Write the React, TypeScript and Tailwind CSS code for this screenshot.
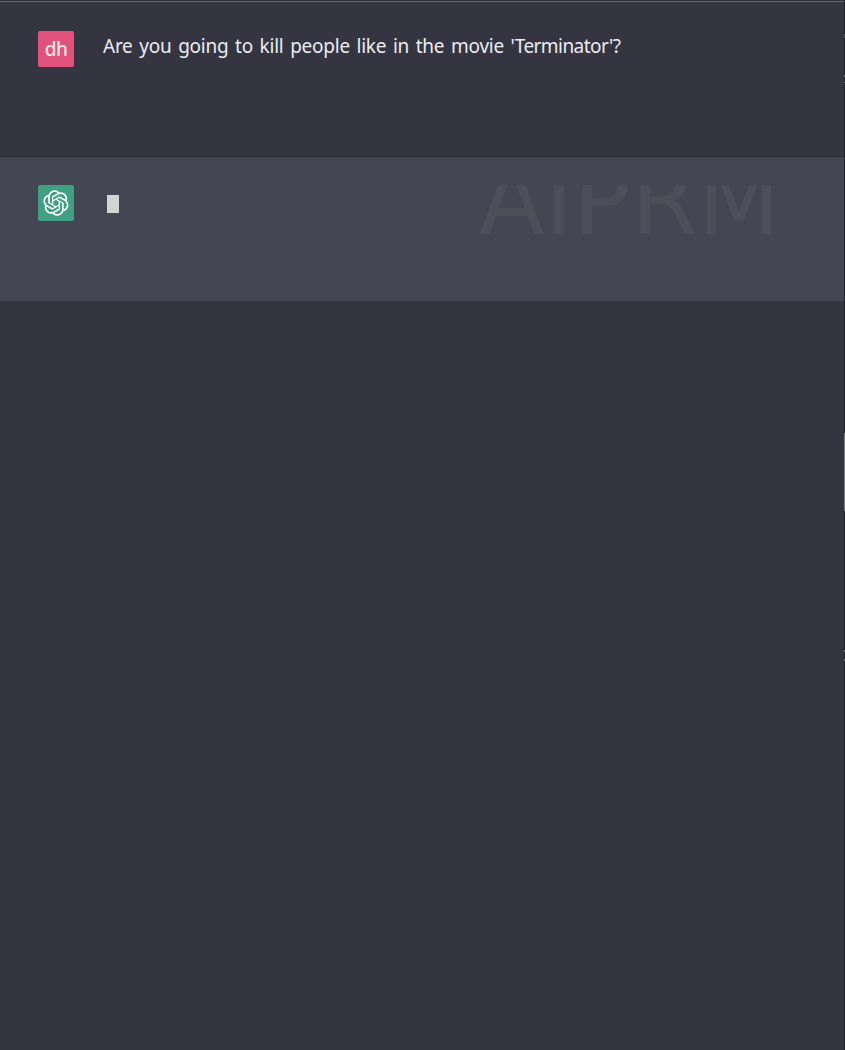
import React from 'react';

const LogoIcon: React.FC = () => (
  <svg viewBox="0 0 41 41" fill="currentColor" className="h-[26px] w-[26px]">
    <path d="M37.5324 16.8707C37.9808 15.5241 38.1363 14.0974 37.9886 12.6859C37.8409 11.2744 37.3934 9.91076 36.676 8.68622C35.6126 6.83404 33.9882 5.3676 32.0373 4.4985C30.0864 3.62941 27.9098 3.40259 25.8215 3.85078C24.8796 2.7893 23.7219 1.94125 22.4257 1.36341C21.1295 0.785575 19.7249 0.491269 18.3058 0.500197C16.1708 0.495044 14.0893 1.16803 12.3614 2.42214C10.6335 3.67624 9.34853 5.44666 8.6917 7.47815C7.30085 7.76286 5.98686 8.3414 4.8377 9.17505C3.68854 10.0087 2.73073 11.0782 2.02839 12.312C0.956464 14.1591 0.498905 16.2988 0.721698 18.4228C0.944492 20.5467 1.83612 22.5449 3.268 24.1293C2.81966 25.4759 2.66413 26.9026 2.81182 28.3141C2.95951 29.7256 3.40701 31.0892 4.12437 32.3138C5.18791 34.1659 6.8123 35.6322 8.76321 36.5013C10.7141 37.3704 12.8907 37.5973 14.9789 37.1492C15.9208 38.2107 17.0786 39.0587 18.3747 39.6366C19.6709 40.2144 21.0755 40.5087 22.4946 40.4998C24.6307 40.5054 26.7133 39.8321 28.4418 38.5772C30.1704 37.3223 31.4556 35.5506 32.1119 33.5179C33.5027 33.2332 34.8167 32.6547 35.9659 31.821C37.115 30.9874 38.0728 29.9178 38.7752 28.684C39.8458 26.8371 40.3023 24.6979 40.0789 22.5748C39.8556 20.4517 38.9639 18.4544 37.5324 16.8707ZM22.4978 37.8849C20.7443 37.8874 19.0459 37.2733 17.6994 36.1501C17.7601 36.117 17.8666 36.0586 17.936 36.0161L25.9004 31.4156C26.1003 31.3019 26.2663 31.137 26.3813 30.9378C26.4964 30.7386 26.5563 30.5124 26.5549 30.2825V19.0542L29.9213 20.998C29.9389 21.0068 29.9541 21.0198 29.9656 21.0359C29.977 21.052 29.9842 21.0707 29.9867 21.0902V30.3889C29.9842 32.375 29.1946 34.2791 27.7909 35.6841C26.3872 37.0892 24.4838 37.8806 22.4978 37.8849ZM6.39227 31.0064C5.51397 29.4888 5.19742 27.7107 5.49804 25.9832C5.55718 26.0187 5.66048 26.0818 5.73461 26.1244L13.699 30.7248C13.8975 30.8408 14.1233 30.902 14.3532 30.902C14.583 30.902 14.8088 30.8408 15.0073 30.7248L24.731 25.1103V28.9979C24.7321 29.0177 24.7283 29.0376 24.7199 29.0556C24.7115 29.0736 24.6988 29.0893 24.6829 29.1012L16.6317 33.7497C14.9096 34.7416 12.8643 35.0097 10.9447 34.4954C9.02506 33.9811 7.38785 32.7263 6.39227 31.0064ZM4.29707 13.6194C5.17156 12.0998 6.55279 10.9364 8.19885 10.3327C8.19885 10.4013 8.19491 10.5228 8.19491 10.6071V19.808C8.19351 20.0378 8.25334 20.2638 8.36823 20.4629C8.48312 20.6619 8.64893 20.8267 8.84863 20.9404L18.5723 26.5542L15.206 28.4979C15.1894 28.5089 15.1703 28.5155 15.1505 28.5173C15.1307 28.5191 15.1107 28.516 15.0924 28.5082L7.04046 23.8557C5.32135 22.8601 4.06716 21.2235 3.55289 19.3046C3.03862 17.3858 3.30624 15.3413 4.29707 13.6194ZM31.955 20.0556L22.2312 14.4411L25.5976 12.4981C25.6142 12.4872 25.6333 12.4805 25.6531 12.4787C25.6729 12.4769 25.6928 12.4801 25.7111 12.4879L33.7631 17.1364C34.9967 17.849 36.0017 18.8982 36.6606 20.1613C37.3194 21.4244 37.6047 22.849 37.4832 24.2684C37.3617 25.6878 36.8382 27.0432 35.9743 28.1759C35.1103 29.3086 33.9415 30.1717 32.6047 30.6641C32.6047 30.5947 32.6047 30.4733 32.6047 30.3889V21.188C32.6066 20.9586 32.5474 20.7328 32.4332 20.5338C32.319 20.3348 32.154 20.1698 31.955 20.0556ZM35.3055 15.0128C35.2464 14.9765 35.1431 14.9142 35.069 14.8717L27.1045 10.2712C26.906 10.1554 26.6803 10.0943 26.4504 10.0943C26.2206 10.0943 25.9948 10.1554 25.7963 10.2712L16.0726 15.8858V11.9982C16.0715 11.9783 16.0753 11.9585 16.0837 11.9405C16.0921 11.9225 16.1048 11.9068 16.1207 11.8949L24.1719 7.25025C25.4053 6.53903 26.8158 6.19376 28.2383 6.25482C29.6608 6.31589 31.0364 6.78077 32.2044 7.59508C33.3723 8.40939 34.2842 9.53945 34.8334 10.8531C35.3826 12.1667 35.5464 13.6095 35.3055 15.0128ZM14.2424 21.9419L10.8752 19.9981C10.8576 19.9893 10.8423 19.9763 10.8309 19.9602C10.8195 19.9441 10.8122 19.9254 10.8098 19.9058V10.6071C10.8107 9.18295 11.2173 7.78848 11.9819 6.58696C12.7466 5.38544 13.8377 4.42659 15.1275 3.82264C16.4173 3.21869 17.8524 2.99464 19.2649 3.1767C20.6775 3.35876 22.0089 3.93941 23.1034 4.85067C23.0427 4.88379 22.937 4.94215 22.8668 4.98473L14.9024 9.58517C14.7025 9.69878 14.5366 9.86356 14.4215 10.0626C14.3065 10.2616 14.2466 10.4877 14.2479 10.7175L14.2424 21.9419ZM16.071 17.9991L20.4018 15.4978L24.7325 17.9975V22.9985L20.4018 25.4983L16.071 22.9985V17.9991Z" />
  </svg>
);

const App: React.FC = () => {
  return (
    <div className="flex h-[1050px] w-[845px] overflow-hidden bg-[#343541] font-['Noto_Sans',sans-serif]">
      <main className="w-[844px] shrink-0">
        <div className="h-0.5 border-b border-[#67666b] bg-[#303039]"></div>

        {/* User message */}
        <div className="flex h-[155px] items-start border-b border-[#2b2c34] pt-[29px] pl-[38px]">
          <div className="flex h-9 w-9 shrink-0 items-center justify-center rounded-xs bg-[#e0527b] pt-px text-[19px] font-medium tracking-[-0.7px] text-[#f3e4e6]">
            dh
          </div>
          <p className="ml-[29px] text-[19px] leading-[30px] tracking-[-0.25px] whitespace-nowrap text-[#ececf1] [word-spacing:2px]">
            Are you going to kill people like in the movie{' '}
            <span className="tracking-[-0.55px]">'Terminator'?</span>
          </p>
        </div>

        {/* Assistant message */}
        <div className="flex h-[145px] items-start border-b border-[#393a46] bg-[#444654] pt-7 pl-[38px]">
          <div className="flex h-9 w-9 shrink-0 items-center justify-center rounded-xs bg-[#40a081] text-white">
            <LogoIcon />
          </div>
          <div className="mt-2.5 ml-[33px] h-[18px] w-3 bg-[#d2d5d1]"></div>
          <div className="ml-[360px] h-[72px] overflow-hidden font-['DejaVu_Sans',sans-serif]">
            <span className="-mt-10 block text-[96px] leading-[112px] text-[#4c4e5a]">AIPRM</span>
          </div>
        </div>
      </main>

      {/* Window edge */}
      <aside className="flex w-px flex-col bg-[#1f2028]">
        <div className="mt-[34px] h-1 bg-[#494a50]"></div>
        <div className="mt-[37px] h-0.5 bg-[#74757a]"></div>
        <div className="mt-[5px] h-px bg-[#74757a]"></div>
        <div className="mt-[350px] h-[78px] bg-[#747d7c]"></div>
        <div className="mt-[139px] h-0.5 bg-[#74757a]"></div>
        <div className="mt-[7px] h-0.5 bg-[#74757a]"></div>
      </aside>
    </div>
  );
};

export default App;
